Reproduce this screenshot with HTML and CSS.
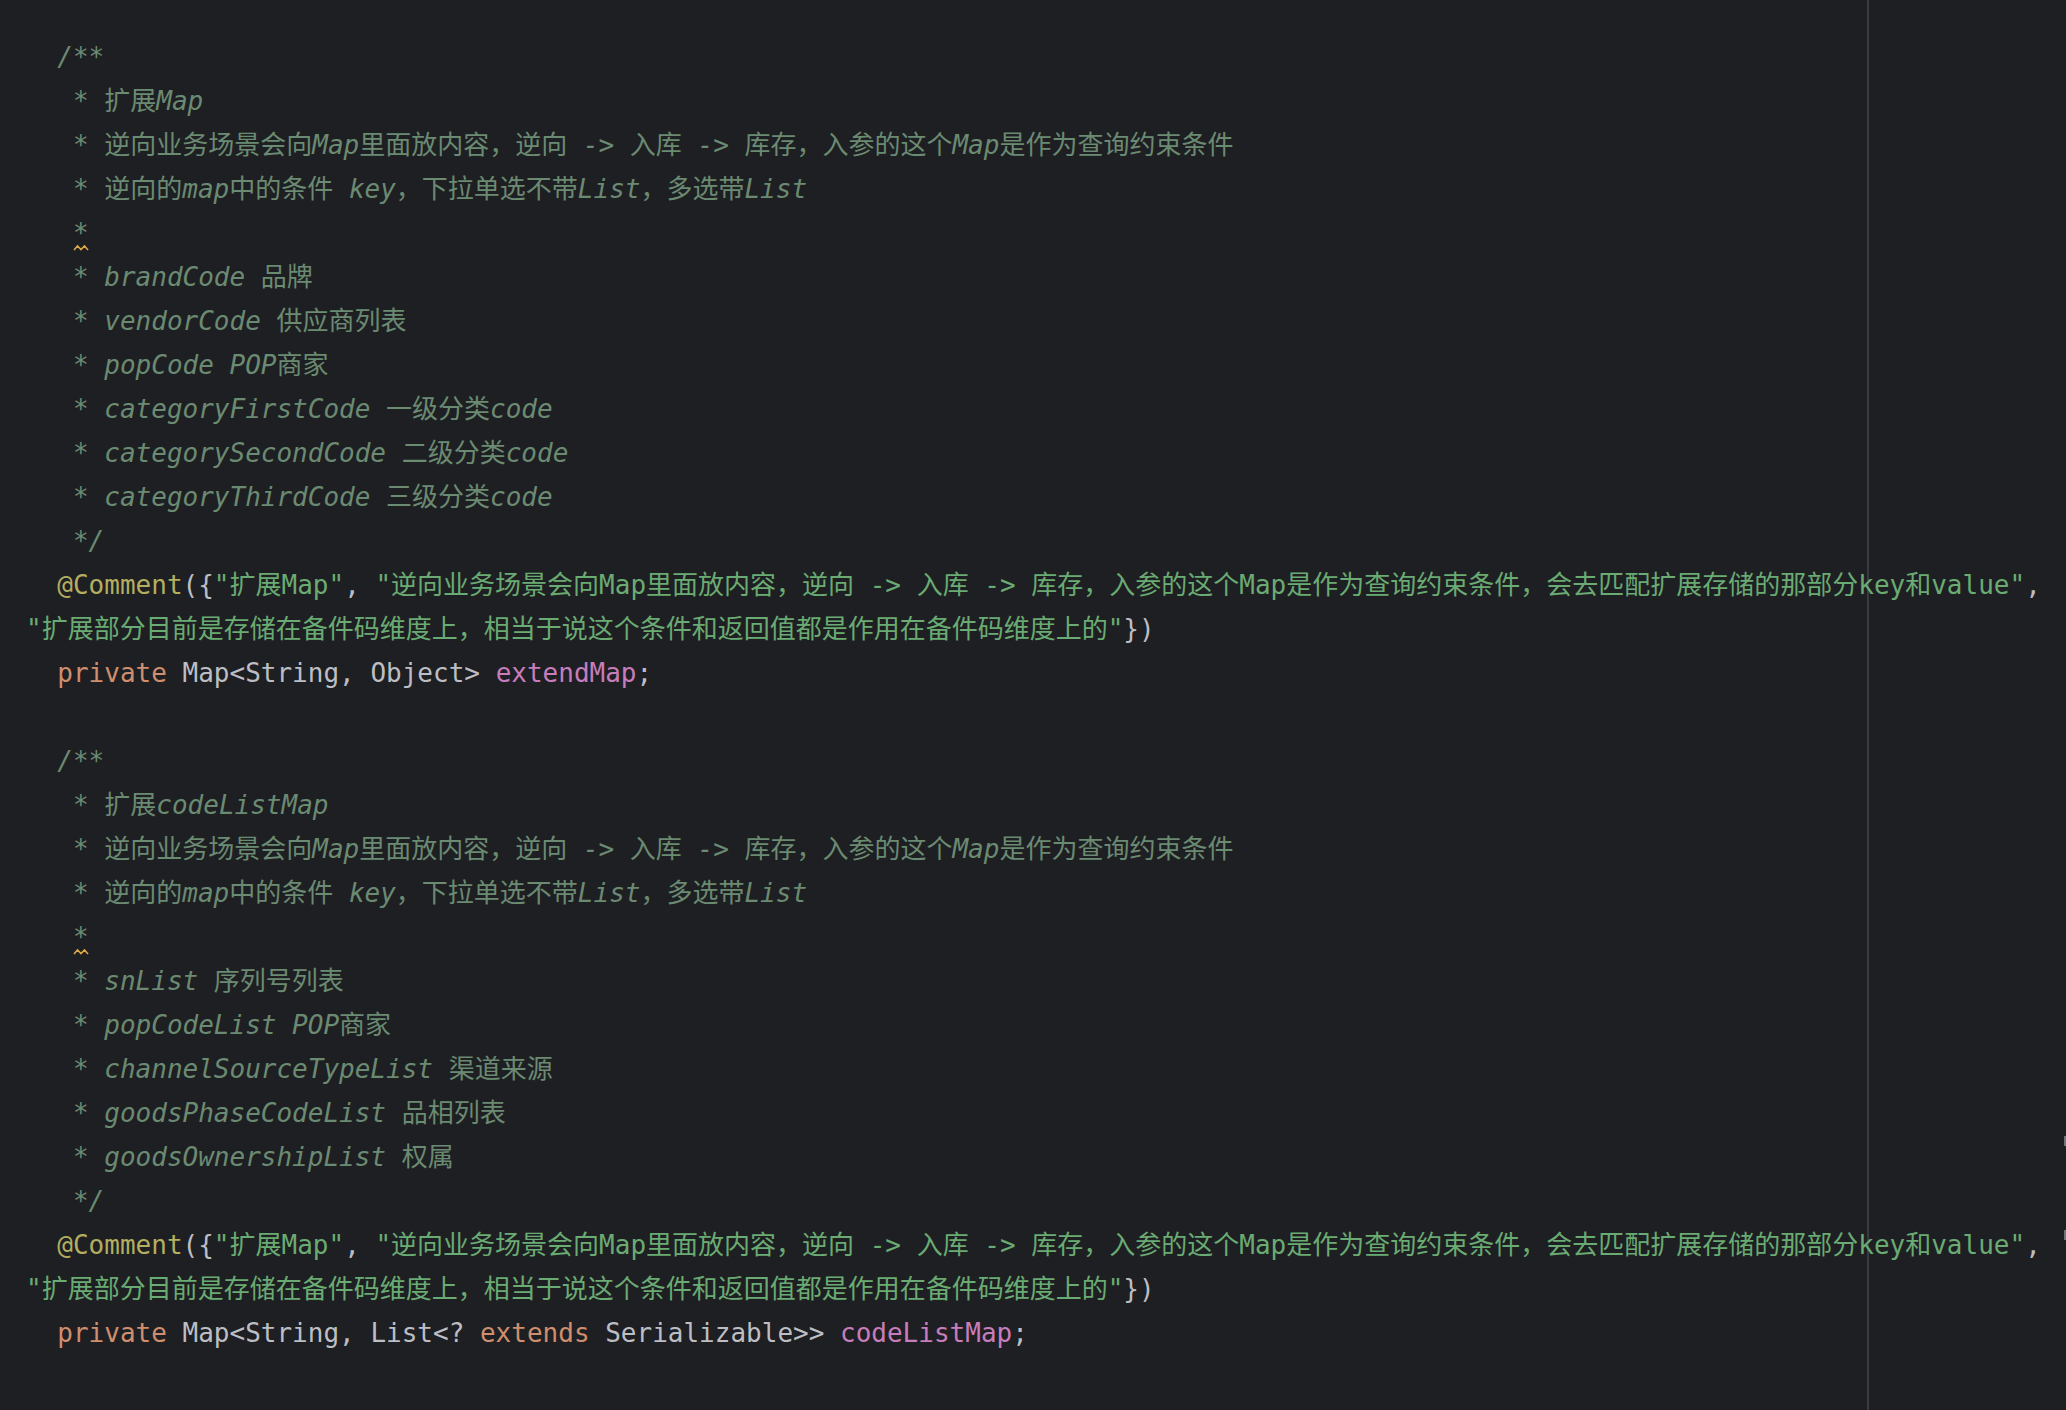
FILE: index.html
```html
<!DOCTYPE html>
<html lang="zh-CN">
<head>
<meta charset="utf-8">
<title>Editor</title>
<link rel="stylesheet" href="styles.css">
</head>
<body>
<div class="editor">
  <div class="ln c">  /**</div>
  <div class="ln c">   * 扩展Map</div>
  <div class="ln c">   * 逆向业务场景会向Map里面放内容，逆向 -&gt; 入库 -&gt; 库存，入参的这个Map是作为查询约束条件</div>
  <div class="ln c">   * 逆向的map中的条件 key，下拉单选不带List，多选带List</div>
  <div class="ln c">   <span class="warn">*<svg class="squig" width="16" height="7" viewBox="0 0 16 7"><polyline points="1,6 4.5,2 8,5.5 11.5,2 15,6" fill="none" stroke="#d9a843" stroke-width="1.6"/></svg></span></div>
  <div class="ln c">   * brandCode 品牌</div>
  <div class="ln c">   * vendorCode 供应商列表</div>
  <div class="ln c">   * popCode POP商家</div>
  <div class="ln c">   * categoryFirstCode 一级分类code</div>
  <div class="ln c">   * categorySecondCode 二级分类code</div>
  <div class="ln c">   * categoryThirdCode 三级分类code</div>
  <div class="ln c">   */</div>
  <div class="ln">  <span class="an">@Comment</span>({<span class="s">"扩展Map"</span>, <span class="s">"逆向业务场景会向Map里面放内容，逆向 -&gt; 入库 -&gt; 库存，入参的这个Map是作为查询约束条件，会去匹配扩展存储的那部分key和value"</span>,</div>
  <div class="ln"><span class="s">"扩展部分目前是存储在备件码维度上，相当于说这个条件和返回值都是作用在备件码维度上的"</span>})</div>
  <div class="ln">  <span class="kw">private</span> Map&lt;String, Object&gt; <span class="fd">extendMap</span>;</div>
  <div class="ln"> </div>
  <div class="ln c">  /**</div>
  <div class="ln c">   * 扩展codeListMap</div>
  <div class="ln c">   * 逆向业务场景会向Map里面放内容，逆向 -&gt; 入库 -&gt; 库存，入参的这个Map是作为查询约束条件</div>
  <div class="ln c">   * 逆向的map中的条件 key，下拉单选不带List，多选带List</div>
  <div class="ln c">   <span class="warn">*<svg class="squig" width="16" height="7" viewBox="0 0 16 7"><polyline points="1,6 4.5,2 8,5.5 11.5,2 15,6" fill="none" stroke="#d9a843" stroke-width="1.6"/></svg></span></div>
  <div class="ln c">   * snList 序列号列表</div>
  <div class="ln c">   * popCodeList POP商家</div>
  <div class="ln c">   * channelSourceTypeList 渠道来源</div>
  <div class="ln c">   * goodsPhaseCodeList 品相列表</div>
  <div class="ln c">   * goodsOwnershipList 权属</div>
  <div class="ln c">   */</div>
  <div class="ln">  <span class="an">@Comment</span>({<span class="s">"扩展Map"</span>, <span class="s">"逆向业务场景会向Map里面放内容，逆向 -&gt; 入库 -&gt; 库存，入参的这个Map是作为查询约束条件，会去匹配扩展存储的那部分key和value"</span>,</div>
  <div class="ln"><span class="s">"扩展部分目前是存储在备件码维度上，相当于说这个条件和返回值都是作用在备件码维度上的"</span>})</div>
  <div class="ln">  <span class="kw">private</span> Map&lt;String, List&lt;? <span class="kw">extends</span> Serializable&gt;&gt; <span class="fd">codeListMap</span>;</div>
</div>
<div class="mark mark1"></div>
<div class="mark mark2"></div>
</body>
</html>
```

FILE: styles.css
```css
html, body {
  margin: 0;
  padding: 0;
}

body {
  width: 2066px;
  height: 1410px;
  overflow: hidden;
  background:
    linear-gradient(to right, transparent 1867px, #393b40 1867px, #393b40 1869px, transparent 1869px),
    #1e1f22;
  position: relative;
}

.editor {
  padding: 35px 0 0 26px;
  font-family: "DejaVu Sans Mono", "Noto Sans CJK SC", monospace;
  font-size: 26px;
  color: #bcbec4;
  font-synthesis: none;
}

.ln {
  height: 44px;
  line-height: 44px;
  white-space: pre;
}

.c {
  color: #6b8a72;
  font-style: italic;
}

.s { color: #6aab73; }
.kw { color: #cf8e6d; }
.fd { color: #c77dbb; }
.an { color: #b3ae60; }

.warn {
  position: relative;
  display: inline-block;
}

.squig {
  position: absolute;
  left: 0;
  top: 33px;
  display: block;
}

.mark {
  position: absolute;
  right: 0;
  width: 2px;
  height: 10px;
  background: #6f737a;
}

.mark1 { top: 1136px; }
.mark2 { top: 1230px; }
```
